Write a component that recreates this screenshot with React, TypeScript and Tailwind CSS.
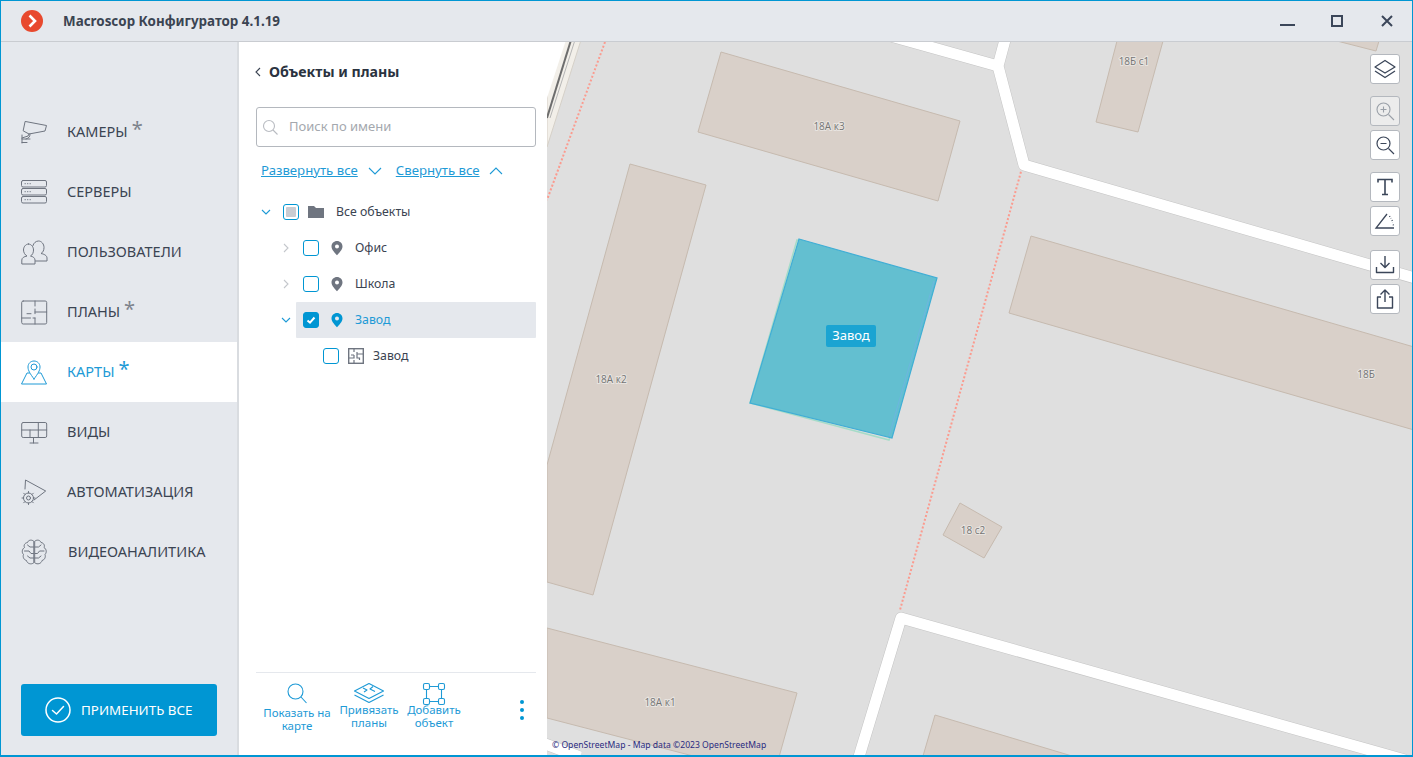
import React from "react";

const S = ({ w = 28, h = 28, vb, children, className = "", sw = 1 }: any) => (
  <svg width={w} height={h} viewBox={vb || `0 0 ${w} ${h}`} fill="none" stroke="currentColor" strokeWidth={sw} strokeLinecap="round" strokeLinejoin="round" className={"shrink-0 " + className}>
    {children}
  </svg>
);

const CameraIcon = () => (
  <S>
    <path d="M5.5 3.5 L26.5 7.5 L25 13 L9 16 L3.5 13 Z" />
    <path d="M9 16 L8 18 L2 20" />
    <path d="M2 17 V25 M2 21 H10 M2 24.5 H7" />
    <path d="M10 16 C10 19 9 20 6 21" />
  </S>
);
const ServerIcon = () => (
  <S>
    <rect x="1.5" y="2.5" width="25" height="6.5" rx="1.5" />
    <rect x="1.5" y="10.5" width="25" height="6.5" rx="1.5" />
    <rect x="1.5" y="18.5" width="25" height="6.5" rx="1.5" />
    <path d="M5 5.7h.4M7.5 5.7h.4M10 5.7h.4M5 13.7h.4M7.5 13.7h.4M10 13.7h.4M5 21.7h.4M7.5 21.7h.4M10 21.7h.4" />
  </S>
);
const UsersIcon = () => (
  <S>
    <path d="M8.5 6 C5.5 6 3.5 9 3.5 12 C3.5 14.5 5 17 7 18 C4 18.5 1.8 20 1.8 22 V26 H15 V22 C15 20 13 18.5 10.5 18 C12.5 17 13.5 14.5 13.5 12 C13.5 9 11.5 6 8.5 6 Z" />
    <path d="M13 7.5 C13.5 5 16 3 18.5 3 C21.5 3 24 6 24 9.5 C24 12 23 14.5 21 15.5 C24 16 27 17.5 27 20 V23 H15.5" />
  </S>
);
const PlanIcon = () => (
  <S>
    <rect x="1.7" y="3" width="25" height="23" rx="1.5" />
    <path d="M15 3 V8 M15 11 V15.7 M15 14 H26.7 M7 15.7 H11 M1.7 20 H10.5 M15 20 V26 M13 20 H15" />
  </S>
);
const MapIcon = () => (
  <S>
    <path d="M14 21 C10 15.5 8 12.5 8 9 C8 5.5 10.7 3 14 3 C17.3 3 20 5.5 20 9 C20 12.5 18 15.5 14 21 Z" />
    <circle cx="14" cy="9" r="3" />
    <path d="M9.5 15 H7 L1.5 26 H26.5 L21 15 H18.5" />
  </S>
);
const ViewsIcon = () => (
  <S>
    <rect x="1.7" y="4.5" width="25" height="15" rx="1.5" />
    <path d="M1.7 12 H26.7 M18.3 4.5 V19.5 M10 12 V19.5" />
    <path d="M13.5 19.5 V25 M10 25 H18" />
  </S>
);
const AutoIcon = () => (
  <S>
    <path d="M5 11 L5.5 2 L25.7 13 L14 22" />
    <circle cx="8.5" cy="20" r="2" />
    <circle cx="8.5" cy="20" r="5" />
    <path d="M8.5 13.5 V15 M8.5 25 V26.5 M2 20 H3.5 M13.5 20 H15 M12 16.5 L13.3 15.2 M5 16.5 L3.7 15.2 M12 23.5 L13.3 24.8 M5 23.5 L3.7 24.8" />
  </S>
);
const BrainIcon = () => (
  <S>
    <path d="M13.5 3 C11 1 8 2.5 7.5 4.5 C4.5 5 3.5 7.5 4.5 9.5 C2 11 1.5 14.5 3.5 16.5 C2.5 19 4 22 6.5 22.5 C7 25.5 11 27 13.5 25 Z" />
    <path d="M15 3 C17.5 1 20.5 2.5 21 4.5 C24 5 25 7.5 24 9.5 C26.5 11 27 14.5 25 16.5 C26 19 24.5 22 22 22.5 C21.5 25.5 17.5 27 15 25 Z" />
    <path d="M13.5 9 H10 L7.5 7 M4.5 13 H9 L11 15.5 H13.5 M13.5 20 H10 L7.5 18" />
    <path d="M15 9 H18.5 L21 7 M24 13 H19.5 L17.5 15.5 H15 M15 20 H18.5 L21 18" />
  </S>
);

const nav: any[] = [
  [CameraIcon, "КАМЕРЫ", true],
  [ServerIcon, "СЕРВЕРЫ", false],
  [UsersIcon, "ПОЛЬЗОВАТЕЛИ", false],
  [PlanIcon, "ПЛАНЫ", true],
  [MapIcon, "КАРТЫ", true, true],
  [ViewsIcon, "ВИДЫ", false],
  [AutoIcon, "АВТОМАТИЗАЦИЯ", false],
  [BrainIcon, "ВИДЕОАНАЛИТИКА", false],
];

const Sidebar = () => (
  <aside className="w-[238px] shrink-0 flex flex-col bg-[#e5e8ed] border-r-2 border-[#d9dce0] pt-[60px]">
    {nav.map(([I, label, star, active]) => (
      <div key={label} className={"h-[60px] flex items-center pl-[19px] gap-[19px] " + (active ? "bg-white text-[#1e9ad6]" : "text-[#6f7580]")}>
        <I />
        <span className={"text-[14.5px] " + (active ? "text-[#1e9ad6]" : "text-[#3b4452]") + (label === "ВИДЕОАНАЛИТИКА" ? " ml-px" : "")}>{label}</span>
        {star && <span className={"text-[20px] leading-none -ml-[15px] mb-[6px] " + (active ? "text-[#1e9ad6]" : "text-[#7d838c]")}>*</span>}
      </div>
    ))}
    <div className="mt-auto mx-5 mb-[19px] h-[52px] rounded-[3px] bg-[#0096d3] flex items-center pl-[24px] gap-[10px] text-white">
      <svg width="26" height="26" viewBox="0 0 26 26" fill="none" stroke="currentColor" strokeWidth="1.5" strokeLinecap="round" strokeLinejoin="round">
        <circle cx="13" cy="13" r="12" />
        <path d="M7.5 13.5 L11.5 17 L18.5 9.5" />
      </svg>
      <span className="text-[13.4px]">ПРИМЕНИТЬ ВСЕ</span>
    </div>
  </aside>
);

const Chevron = ({ dir, className = "" }: { dir: "down" | "right" | "left" | "up"; className?: string }) => {
  const d = { down: "M2 4 L6 8 L10 4", right: "M4 2 L8 6 L4 10", left: "M8 2 L4 6 L8 10", up: "M2 8 L6 4 L10 8" }[dir];
  return (
    <svg width="12" height="12" viewBox="0 0 12 12" fill="none" stroke="currentColor" strokeWidth="1.1" className={className}>
      <path d={d} />
    </svg>
  );
};

const Pin = ({ color }: { color: string }) => (
  <svg width="16" height="16" viewBox="0 0 16 16" className="block">
    <path fillRule="evenodd" fill={color} d="M8 1 C5 1 2.5 3.4 2.5 6.4 C2.5 9.8 6.2 12.8 8 15.3 C9.8 12.8 13.5 9.8 13.5 6.4 C13.5 3.4 11 1 8 1 Z M8 4.4 A2 2 0 1 1 8 8.4 A2 2 0 1 1 8 4.4 Z" />
  </svg>
);
const Folder = () => (
  <svg width="16" height="16" viewBox="0 0 16 16" className="block">
    <path fill="#6f7580" d="M0 2 H6 L8 4 H16 V14 H0 Z" />
  </svg>
);
const SmallPlan = () => (
  <svg width="16" height="16" viewBox="0 0 16 16" fill="none" stroke="#6f7580" strokeWidth="1.4" className="block">
    <rect x=".7" y=".7" width="14.6" height="14.6" />
    <path d="M6 .7 V4 M6 7 V10 H1 M6 12 V15.3 M3 7 H6 M9 6 H15 M9 4 V10 H11.5 V12" strokeWidth="1.2" />
  </svg>
);

const Box = ({ state }: { state?: "mixed" | "checked" }) => (
  <span className={"w-4 h-4 rounded-[3px] border border-[#0096d3] flex items-center justify-center shrink-0 " + (state === "checked" ? "bg-[#0096d3]" : "bg-white")}>
    {state === "mixed" && <span className="w-[10px] h-[10px] rounded-[1px] bg-[#c9ccd2]" />}
    {state === "checked" && (
      <svg width="12" height="12" viewBox="0 0 12 12" fill="none" stroke="white" strokeWidth="2">
        <path d="M2.5 6.5 L5 8.7 L9.5 3.5" />
      </svg>
    )}
  </span>
);

const Action = ({ w, icon, lines, pt }: any) => (
  <div className={"flex flex-col items-center text-[#1e9ad6] text-[11.5px] leading-[13px] " + w}>
    {icon}
    <span className={"text-center whitespace-pre " + pt}>{lines}</span>
  </div>
);

const Panel = () => (
  <section className="w-[308px] shrink-0 bg-white flex flex-col pl-[17px] pr-[11px]">
    <div className="flex items-center h-[22px] mt-[19px] text-[#2b3340]">
      <Chevron dir="left" className="-ml-[4px] text-[#3b4452]" />
      <h1 className="ml-[5px] text-[14.2px] font-bold leading-none">Объекты и планы</h1>
    </div>
    <div className="mt-[24px] h-10 border border-[#b4b8be] rounded-[3px] flex items-center pl-[4px] text-[#b9bcc2]">
      <svg width="18" height="18" viewBox="0 0 18 18" fill="none" stroke="currentColor" strokeWidth="1.1">
        <circle cx="8" cy="8" r="5.5" />
        <path d="M12 12 L16.5 16.5" />
      </svg>
      <span className="ml-[10px] text-[13px] text-[#a4a8ae]">Поиск по имени</span>
    </div>
    <div className="mt-[13px] flex items-center h-[22px] pl-[5px] text-[#1e9ad6] text-[13.2px]">
      <span className="underline">Развернуть все</span>
      <svg width="14" height="10" viewBox="0 0 14 10" fill="none" stroke="currentColor" strokeWidth="1.1" className="ml-[10px]"><path d="M1 2 L7 8 L13 2" /></svg>
      <span className="underline ml-[14px]">Свернуть все</span>
      <svg width="14" height="10" viewBox="0 0 14 10" fill="none" stroke="currentColor" strokeWidth="1.1" className="ml-[9px]"><path d="M1 8 L7 2 L13 8" /></svg>
    </div>
    <div className="mt-[12px] flex flex-col text-[12.3px] text-[#3b4452]">
      <div className="h-9 flex items-center">
        <span className="w-5 flex justify-center text-[#1e9ad6]"><Chevron dir="down" /></span>
        <span className="flex-1 h-full flex items-center pl-[7px]">
          <Box state="mixed" />
          <span className="ml-[9px]"><Folder /></span>
          <span className="ml-[12px]">Все объекты</span>
        </span>
      </div>
      <div className="h-9 flex items-center ml-5">
        <span className="w-5 flex justify-center text-[#c4c7cc]"><Chevron dir="right" /></span>
        <span className="flex-1 h-full flex items-center pl-[7px]">
          <Box />
          <span className="ml-[10px]"><Pin color="#6f7580" /></span>
          <span className="ml-[10px]">Офис</span>
        </span>
      </div>
      <div className="h-9 flex items-center ml-5">
        <span className="w-5 flex justify-center text-[#c4c7cc]"><Chevron dir="right" /></span>
        <span className="flex-1 h-full flex items-center pl-[7px]">
          <Box />
          <span className="ml-[10px]"><Pin color="#6f7580" /></span>
          <span className="ml-[10px]">Школа</span>
        </span>
      </div>
      <div className="h-9 flex items-center ml-5">
        <span className="w-5 flex justify-center text-[#1e9ad6]"><Chevron dir="down" /></span>
        <span className="flex-1 h-full flex items-center pl-[7px] bg-[#e5e8ed] text-[#1e9ad6] rounded-[1px]">
          <Box state="checked" />
          <span className="ml-[10px]"><Pin color="#0096d3" /></span>
          <span className="ml-[10px]">Завод</span>
        </span>
      </div>
      <div className="h-9 flex items-center ml-[60px] pl-[7px]">
        <Box />
        <span className="ml-[9px]"><SmallPlan /></span>
        <span className="ml-[9px]">Завод</span>
      </div>
    </div>
    <div className="mt-auto h-[83px] border-t border-[#e5e8ed] flex pt-[9px]">
      <Action
        w="w-[74px] ml-[4px]"
        pt="mt-0"
        lines={"Показать на\nкарте"}
        icon={
          <svg width="24" height="24" viewBox="0 0 24 24" fill="none" stroke="currentColor" strokeWidth="1.1">
            <circle cx="10.5" cy="9.5" r="7.5" />
            <path d="M16 15 L21.5 21" />
          </svg>
        }
      />
      <Action
        w="w-[70px]"
        pt="-mt-[3px]"
        lines={"Привязать\nпланы"}
        icon={
          <svg width="32" height="24" viewBox="0 0 32 24" fill="none" stroke="currentColor" strokeWidth="1.1" strokeLinejoin="round">
            <path d="M16 1.5 L30.5 9 L16 16.5 L1.5 9 Z" />
            <path d="M1.5 13 L16 20.5 L30.5 13" />
            <path d="M10 6 L14 8 L11 10 M20 4.5 L17 7 L22 9.5" />
          </svg>
        }
      />
      <Action
        w="w-[60px]"
        pt="-mt-[3px]"
        lines={"Добавить\nобъект"}
        icon={
          <svg width="24" height="24" viewBox="0 0 24 24" fill="none" stroke="currentColor" strokeWidth="1.1">
            <rect x="1.5" y="1.5" width="6" height="6" rx="1.5" />
            <rect x="16.5" y="1.5" width="6" height="6" rx="1.5" />
            <rect x="1.5" y="16.5" width="6" height="6" rx="1.5" />
            <rect x="16.5" y="16.5" width="6" height="6" rx="1.5" />
            <path d="M7.5 4.5 H16.5 M7.5 19.5 H16.5 M4.5 7.5 V16.5 M19.5 7.5 V16.5" />
          </svg>
        }
      />
      <div className="ml-auto w-7 flex flex-col items-center gap-[4px] pt-[18px]">
        <span className="w-[4px] h-[4px] rounded-full bg-[#0096d3]" />
        <span className="w-[4px] h-[4px] rounded-full bg-[#0096d3]" />
        <span className="w-[4px] h-[4px] rounded-full bg-[#0096d3]" />
      </div>
    </div>
  </section>
);

const buildings = [
  "721,52 960,121 938,201 698,132",
  "630,164 706,185 593,595 547,582 547,465",
  "1117,41 1163,41 1138,132 1096,122",
  "1337,41 1379,41 1376,51",
  "1031,236 1414,347 1414,430 1009,313",
  "960,503 1002,527 984,558 943,535",
  "547,628 797,693 779,757 697,757 547,718",
  "935,715 1072,756 923,756",
];
const roads = [
  "880,33 998,66",
  "1005,40 998,66 1024,165 1415,278",
  "858,760 901,618 1405,760",
  "540,742 580,757",
];
const labels: [string, number, number][] = [
  ["18А к3", 829, 130],
  ["18А к2", 611, 383],
  ["18Б с1", 1134, 65],
  ["18Б", 1366, 378],
  ["18 с2", 973, 534],
  ["18А к1", 660, 706],
];

const Tool = ({ children, disabled }: any) => (
  <div className={"w-[30px] h-[30px] rounded-[3px] border border-[#b4b8be] flex items-center justify-center " + (disabled ? "bg-[#ececec] text-[#9aa0a8]" : "bg-white text-[#3b4659]")}>
    {children}
  </div>
);

const Map = () => (
  <main className="flex-1 relative overflow-hidden bg-[#dfdfdf]">
    <svg viewBox="547 42 865 713" className="absolute inset-0 w-full h-full" fontFamily="'Open Sans', sans-serif">
      <path d="M581 40 L547 147 L547 40 Z" fill="#f2efe9" stroke="#d5d0c8" strokeWidth="1" />
      <path d="M571 40 L547 118" stroke="#6d6d6d" strokeWidth="2" fill="none" />
      <path d="M575 40 L550 118" stroke="#b5b5b5" strokeWidth="1" fill="none" />
      <path d="M566 40 L547 98 L547 40 Z" fill="#ffffff" />
      {buildings.map((p) => (
        <polygon key={p} points={p} fill="#d9d0c9" stroke="#c6baaf" strokeWidth="1" />
      ))}
      <path d="M605 42 L547 200 M1022 168 L900 610" stroke="#fb9b8f" strokeWidth="2" strokeDasharray="2 2" fill="none" />
      {roads.map((p) => (
        <polyline key={p + "c"} points={p} fill="none" stroke="#c4c4c4" strokeWidth="12" strokeLinejoin="round" />
      ))}
      {roads.map((p) => (
        <polyline key={p} points={p} fill="none" stroke="#ffffff" strokeWidth="11" strokeLinejoin="round" />
      ))}
      {labels.map(([t, x, y]) => (
        <text key={t} x={x} y={y} textAnchor="middle" fontSize="10" fill="#747474" stroke="#e8e4e0" strokeWidth="2" style={{ paintOrder: "stroke" }}>
          {t}
        </text>
      ))}
      <polygon points="797,240 935,279 889,440 750,403" fill="none" stroke="#a5dcc8" strokeWidth="1.5" />
      <polygon points="799,239 937,278 892,438 750,403" fill="#63bfd0" stroke="#40aed5" strokeWidth="1.2" />
      <path d="M934 281 L889 436" stroke="#6db6e0" strokeWidth="1" fill="none" />
    </svg>
    <span className="absolute left-[279px] top-[283px] w-[50px] h-[22px] rounded-[2px] bg-[#1ba4d2] text-white text-[13px] flex items-center justify-center">Завод</span>
    <span className="absolute left-[5px] bottom-[3px] text-[8.6px] leading-[14px] text-[#2a2a80] whitespace-nowrap">© OpenStreetMap - Map data ©2023 OpenStreetMap</span>
    <div className="absolute top-3 right-3 flex flex-col">
      <Tool>
        <svg width="24" height="22" viewBox="0 0 24 22" fill="none" stroke="currentColor" strokeWidth="1.3" strokeLinejoin="round"><path d="M12 2.5 L22 9 L12 15 L2 9 Z" /><path d="M2 13 L12 19.5 L22 13" /></svg>
      </Tool>
      <div className="mt-3"><Tool disabled>
        <svg width="22" height="22" viewBox="0 0 22 22" fill="none" stroke="currentColor" strokeWidth="1.1"><circle cx="9.5" cy="9.5" r="6.5" /><path d="M14.5 14.5 L20 20 M6.5 9.5 H12.5 M9.5 6.5 V12.5" /></svg>
      </Tool></div>
      <div className="mt-1"><Tool>
        <svg width="22" height="22" viewBox="0 0 22 22" fill="none" stroke="currentColor" strokeWidth="1.2"><circle cx="9.5" cy="9.5" r="6.5" /><path d="M14.5 14.5 L20 20 M6.5 9.5 H12.5" /></svg>
      </Tool></div>
      <div className="mt-3"><Tool>
        <svg width="20" height="20" viewBox="0 0 20 20" fill="none" stroke="currentColor" strokeWidth="1.6"><path d="M3 5.5 V2.5 H17 V5.5 M10 2.5 V17.5 M7 17.5 H13" /></svg>
      </Tool></div>
      <div className="mt-1"><Tool>
        <svg width="22" height="22" viewBox="0 0 22 22" fill="none" stroke="currentColor" strokeWidth="1.3"><path d="M13 4 L2 18 H20" /><path d="M15.5 6 L17 8.5 M18 10 L18.7 12.5 M19.2 14.5 L19.5 16" strokeDasharray="1 1.5" /></svg>
      </Tool></div>
      <div className="mt-[14px]"><Tool>
        <svg width="22" height="22" viewBox="0 0 22 22" fill="none" stroke="currentColor" strokeWidth="1.4" strokeLinejoin="round"><path d="M11 2 V13 M6.5 9 L11 13.5 L15.5 9" /><path d="M2.5 13 V18.5 H19.5 V13" /></svg>
      </Tool></div>
      <div className="mt-1"><Tool>
        <svg width="22" height="22" viewBox="0 0 22 22" fill="none" stroke="currentColor" strokeWidth="1.4" strokeLinejoin="round"><path d="M11 14 V2.5 M6.5 6.5 L11 2 L15.5 6.5" /><path d="M7 9 H3.5 V20 H18.5 V9 H15" /></svg>
      </Tool></div>
    </div>
  </main>
);

export default function App() {
  return (
    <div className="w-[1413px] h-[757px] flex flex-col border border-b-2 border-[#0096d3] bg-white overflow-hidden font-['Noto_Sans','Open_Sans',sans-serif]">
      <header className="h-[41px] shrink-0 flex items-center bg-[#e5e8ed] border-b border-[#c9ccd1]">
        <svg width="24" height="24" viewBox="0 0 24 24" className="ml-[19px] shrink-0">
          <circle cx="12" cy="12" r="11" fill="#e8492e" />
          <path d="M9.5 6.5 L15 12 L9.5 17.5" fill="none" stroke="white" strokeWidth="2.6" />
        </svg>
        <span className="ml-[19px] text-[13.4px] font-bold text-[#3b4452]">Macroscop Конфигуратор 4.1.19</span>
        <div className="ml-auto flex text-[#3b4659]">
          <div className="w-[50px] h-[38px] flex items-center justify-center">
            <span className="w-[15px] h-[2px] mt-[7px] bg-[#3b4659]" />
          </div>
          <div className="w-[50px] h-[38px] flex items-center justify-center">
            <span className="w-[12px] h-[12px] border-2 border-[#3b4659]" />
          </div>
          <div className="w-[50px] h-[38px] flex items-center justify-center">
            <svg width="12" height="12" viewBox="0 0 12 12" stroke="currentColor" strokeWidth="2"><path d="M1 1 L11 11 M11 1 L1 11" /></svg>
          </div>
        </div>
      </header>
      <div className="flex-1 flex min-h-0">
        <Sidebar />
        <Panel />
        <Map />
      </div>
    </div>
  );
}
